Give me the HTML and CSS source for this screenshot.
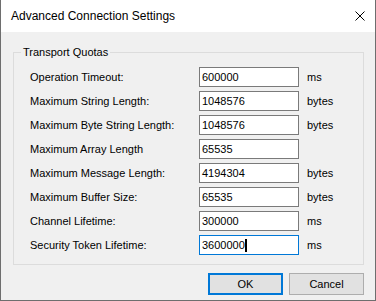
FILE: index.html
```html
<!DOCTYPE html>
<html lang="en">
<head>
    <meta charset="UTF-8">
    <title>Advanced Connection Settings</title>
    <link rel="stylesheet" href="styles.css">
</head>
<body>
    <div class="window">
        <div class="titlebar">
            <span class="title">Advanced Connection Settings</span>
            <svg class="close" width="10" height="10" viewBox="0 0 10 10">
                <path d="M0.5 0.5 L9.5 9.5 M9.5 0.5 L0.5 9.5" stroke="#000" stroke-width="1" fill="none"/>
            </svg>
        </div>
        <div class="content">
            <fieldset class="group">
                <legend>Transport Quotas</legend>
                <div class="fields">
                    <label>Operation Timeout:</label>
                    <div class="textbox">600000</div>
                    <span class="unit">ms</span>

                    <label>Maximum String Length:</label>
                    <div class="textbox">1048576</div>
                    <span class="unit">bytes</span>

                    <label>Maximum Byte String Length:</label>
                    <div class="textbox">1048576</div>
                    <span class="unit">bytes</span>

                    <label>Maximum Array Length</label>
                    <div class="textbox">65535</div>
                    <span class="unit"></span>

                    <label>Maximum Message Length:</label>
                    <div class="textbox">4194304</div>
                    <span class="unit">bytes</span>

                    <label>Maximum Buffer Size:</label>
                    <div class="textbox">65535</div>
                    <span class="unit">bytes</span>

                    <label>Channel Lifetime:</label>
                    <div class="textbox">300000</div>
                    <span class="unit">ms</span>

                    <label>Security Token Lifetime:</label>
                    <div class="textbox focused">3600000<span class="caret"></span></div>
                    <span class="unit">ms</span>
                </div>
            </fieldset>
            <div class="buttons">
                <button class="btn default">OK</button>
                <button class="btn">Cancel</button>
            </div>
        </div>
    </div>
</body>
</html>
```

FILE: styles.css
```css
:root {
    --face: #f0f0f0;
    --frame: #6e6e6e;
    --accent: #0078d7;
    --group-line: #dcdcdc;
}

* {
    margin: 0;
    padding: 0;
    box-sizing: border-box;
}

body {
    font-family: 'Liberation Sans', Arial, sans-serif;
    font-size: 11px;
    color: #000;
    background: var(--face);
}

.window {
    width: 376px;
    height: 301px;
    border: 1px solid var(--frame);
    border-top: none;
    background: var(--face);
    display: flex;
    flex-direction: column;
}

.titlebar {
    height: 32px;
    background: #fff;
    display: flex;
    align-items: center;
    justify-content: space-between;
    padding: 0 10px 0 10px;
}

.title {
    font-size: 12px;
}

.close {
    display: block;
}

.content {
    flex: 1;
    padding: 14px 10px 0 12px;
}

.group {
    width: 351px;
    border: 1px solid var(--group-line);
    padding: 8px 10px 9px 16px;
}

.group legend {
    margin-left: -9px;
    padding: 0 2px;
    line-height: 13px;
}

.fields {
    display: grid;
    grid-template-columns: 161px 100px auto;
    grid-auto-rows: 20px;
    row-gap: 4px;
    column-gap: 8px;
    align-items: center;
}

.textbox {
    height: 20px;
    background: #fff;
    border: 1px solid #7a7a7a;
    padding: 0 2px;
    line-height: 18px;
    display: flex;
    align-items: center;
}

.textbox.focused {
    border-color: var(--accent);
}

.caret {
    display: inline-block;
    width: 2px;
    height: 13px;
    background: #000;
}

.buttons {
    display: flex;
    justify-content: flex-end;
    gap: 6px;
    margin-top: 8px;
    padding-right: 1px;
}

.btn {
    width: 75px;
    height: 22px;
    font-family: inherit;
    font-size: 11px;
    color: #000;
    background: #e1e1e1;
    border: 1px solid #adadad;
}

.btn.default {
    border: 2px solid var(--accent);
}
```
